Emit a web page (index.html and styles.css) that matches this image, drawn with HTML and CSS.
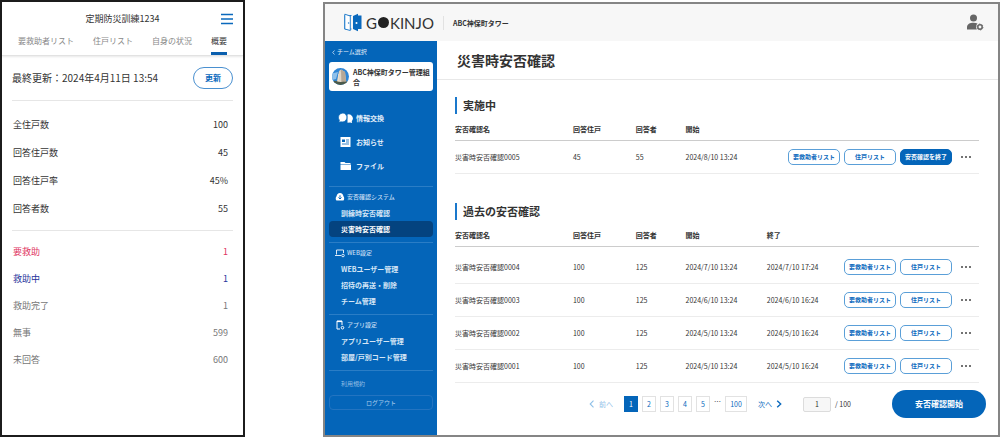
FILE: index.html
```html
<!DOCTYPE html>
<html lang="ja">
<head>
<meta charset="utf-8">
<meta name="viewport" content="width=device-width, initial-scale=1">
<title>GOKINJO 災害時安否確認</title>
<link rel="stylesheet" href="styles.css">
</head>
<body>
<div class="screens">
  <section class="phone">
    <header class="phone-header">
      <div class="phone-bar">
        <h2 class="phone-title">定期防災訓練1234</h2>
        <button class="menu-button" type="button" aria-label="メニュー">
          <svg width="12" height="12" viewBox="0 0 12 12"><path d="M0 1.500h12M0 6h12M0 10.500h12" stroke="#0a69bd" stroke-width="1.400"/></svg>
        </button>
      </div>
      <nav class="tabs">
        <a class="tab" href="#">要救助者リスト</a>
        <a class="tab" href="#">住戸リスト</a>
        <a class="tab" href="#">自身の状況</a>
        <a class="tab tab-active" href="#">概要</a>
      </nav>
    </header>
    <div class="phone-body">
      <div class="updated">
        <span>最終更新：2024年4月11日 13:54</span>
        <button class="refresh" type="button">更新</button>
      </div>
      <dl class="stats">
        <div class="stat"><dt>全住戸数</dt><dd>100</dd></div>
        <div class="stat"><dt>回答住戸数</dt><dd>45</dd></div>
        <div class="stat"><dt>回答住戸率</dt><dd>45%</dd></div>
        <div class="stat"><dt>回答者数</dt><dd>55</dd></div>
      </dl>
      <dl class="stats stats-status">
        <div class="stat stat-rescue"><dt>要救助</dt><dd>1</dd></div>
        <div class="stat stat-ongoing"><dt>救助中</dt><dd>1</dd></div>
        <div class="stat"><dt>救助完了</dt><dd>1</dd></div>
        <div class="stat"><dt>無事</dt><dd>599</dd></div>
        <div class="stat"><dt>未回答</dt><dd>600</dd></div>
      </dl>
    </div>
  </section>

  <section class="admin">
    <header class="admin-header">
      <div class="logo">
        <svg width="18" height="19" viewBox="0 0 18 19">
          <path d="M7.500 2.500H.6v13.500h6.900" fill="none" stroke="#2a80cc" stroke-width="1"/>
          <path d="M.8 1.200 6.300 3v14.500L.8 16z" fill="#fff" stroke="#2a80cc" stroke-width="1"/>
          <circle cx="4.600" cy="10" r=".8" fill="#2a80cc"/>
          <path d="M9 3 14 .8v17.400L9 16zM14 2.500h3.500v13.500H14z" fill="#0a69bd"/>
          <circle cx="12.500" cy="10" r="1" fill="#fff"/>
        </svg>
        <span class="logo-text">G<span class="logo-dot"></span>KINJO</span>
      </div>
      <span class="building">ABC神保町タワー</span>
      <button class="account" type="button" aria-label="アカウント設定">
        <svg width="18" height="17" viewBox="0 0 18 17">
          <circle cx="7.500" cy="4" r="3.500" fill="#666"/>
          <path d="M1 15.500v-2.200C1 10 4 8.700 7.500 8.700c1.600 0 2.900.3 4 .8-1.500 1.500-1.800 4-.6 6z" fill="#666"/>
          <circle cx="14" cy="13" r="2.200" fill="none" stroke="#666" stroke-width="1.500"/>
          <circle cx="14" cy="13" r="3" fill="none" stroke="#666" stroke-width=".8" stroke-dasharray="1.500 1.640"/>
        </svg>
      </button>
    </header>
    <div class="admin-body">
      <aside class="sidebar">
        <a class="back" href="#"><svg width="3" height="5" viewBox="0 0 3 5"><path d="M2.500.5.7 2.500l1.800 2" fill="none" stroke="#cfe3f5" stroke-width=".8"/></svg>チーム選択</a>
        <a class="team" href="#">
          <svg class="avatar" width="17" height="17" viewBox="0 0 17 17">
            <defs><clipPath id="round"><circle cx="8.500" cy="8.500" r="8.500"/></clipPath></defs>
            <g clip-path="url(#round)">
              <path d="M0 0h17v17H0z" fill="#2f86d6"/>
              <path d="M0 5.500 6 4l-2 7-4 1z" fill="#8fc0ea"/>
              <path d="M4.500 15 7 3l2-1.500L13 4l1.500 12z" fill="#d9cdbd"/>
              <path d="M9 1.500 13 4l1.500 12H9.500z" fill="#b5a796"/>
              <path d="M6.500 6v8M8 4v10" stroke="#f1e9de" stroke-width=".6"/>
              <path d="M0 13.500c4-2 6 1 9 .5s5 0 8-1V17H0z" fill="#4c5a4a"/>
            </g>
          </svg>
          <span>ABC神保町タワー管理組合</span>
        </a>
        <nav class="main-nav">
          <a class="nav-link" href="#"><svg width="15" height="12" viewBox="0 0 15 12"><path d="M9.500 2.500a4.200 4.200 0 0 1 4.300 6.800l.3 1.700-2-.5-2.600.2z" fill="#fff"/><path d="M5 1a4.500 4.500 0 1 1-1.800 8.800L.8 10.300l.6-2A4.500 4.500 0 0 1 5 1z" fill="#fff" stroke="#0465b9" stroke-width=".7"/></svg>情報交換</a>
          <a class="nav-link" href="#"><svg width="15" height="12" viewBox="0 0 15 12"><rect x="2.500" y="1" width="10" height="10" fill="#fff"/><path d="M4 3.500h3v2.500H4z" fill="#0465b9"/><path d="M8 4h3M8 6h3M4 8h7" stroke="#0465b9" stroke-width=".8"/></svg>お知らせ</a>
          <a class="nav-link" href="#"><svg width="15" height="12" viewBox="0 0 15 12"><path d="M2.500 2h4l1 1h5v1h-10zM2.500 4.500h10.500v5.500H2.500z" fill="#fff"/></svg>ファイル</a>
        </nav>
        <div class="group">
          <h3 class="group-title"><svg width="10" height="10" viewBox="0 0 10 10"><path d="M5 1c2 0 3.200 1.500 3.400 3.200C9.500 5 9.500 8.500 8 8.500H2C.4 8.500.4 5 1.600 4.200 1.800 2.500 3 1 5 1z" fill="#fff"/><path d="M5 3.300v2.500M3.500 5.500 5 7l1.500-1.500" fill="none" stroke="#0465b9" stroke-width="1"/></svg>安否確認システム</h3>
          <a class="sub-link" href="#">訓練時安否確認</a>
          <a class="sub-link sub-link-active" href="#">災害時安否確認</a>
        </div>
        <div class="group">
          <h3 class="group-title"><svg width="10" height="10" viewBox="0 0 10 10"><path d="M1.500 6.500v-4.500h7v3M0 7.500h6" fill="none" stroke="#dceaf7" stroke-width="1"/><circle cx="8" cy="7.500" r="1.300" fill="none" stroke="#dceaf7" stroke-width="1"/></svg>WEB設定</h3>
          <a class="sub-link" href="#">WEBユーザー管理</a>
          <a class="sub-link" href="#">招待の再送・削除</a>
          <a class="sub-link" href="#">チーム管理</a>
        </div>
        <div class="group">
          <h3 class="group-title"><svg width="10" height="10" viewBox="0 0 10 10"><path d="M5 9H2V1h5v4" fill="none" stroke="#fff" stroke-width="1"/><path d="M2 1.500h5" stroke="#fff" stroke-width="1.200"/><circle cx="7.500" cy="7.700" r="1.300" fill="none" stroke="#fff" stroke-width="1"/></svg>アプリ設定</h3>
          <a class="sub-link" href="#">アプリユーザー管理</a>
          <a class="sub-link" href="#">部屋/戸別コード管理</a>
        </div>
        <div class="side-footer">
          <a class="terms" href="#">利用規約</a>
          <button class="logout" type="button">ログアウト</button>
        </div>
      </aside>

      <main class="main">
        <h1 class="page-title">災害時安否確認</h1>
        <div class="content">
          <h2 class="section-title">実施中</h2>
          <table class="table">
            <colgroup><col class="c-name"><col class="c-homes"><col class="c-people"><col class="c-date"><col></colgroup>
            <thead><tr><th>安否確認名</th><th>回答住戸</th><th>回答者</th><th>開始</th><th></th></tr></thead>
            <tbody>
              <tr><td>災害時安否確認0005</td><td>45</td><td>55</td><td>2024/8/10 13:24</td><td><div class="actions"><button class="pill" type="button">要救助者リスト</button><button class="pill" type="button">住戸リスト</button><button class="pill pill-solid" type="button">安否確認を終了</button><button class="more" type="button" aria-label="その他"><i></i><i></i><i></i></button></div></td></tr>
            </tbody>
          </table>

          <h2 class="section-title section-next">過去の安否確認</h2>
          <table class="table table-past">
            <colgroup><col class="c-name"><col class="c-homes"><col class="c-people"><col class="c-date"><col class="c-end"><col></colgroup>
            <thead><tr><th>安否確認名</th><th>回答住戸</th><th>回答者</th><th>開始</th><th>終了</th><th></th></tr></thead>
            <tbody>
              <tr><td>災害時安否確認0004</td><td>100</td><td>125</td><td>2024/7/10 13:24</td><td>2024/7/10 17:24</td><td><div class="actions"><button class="pill" type="button">要救助者リスト</button><button class="pill" type="button">住戸リスト</button><button class="more" type="button" aria-label="その他"><i></i><i></i><i></i></button></div></td></tr>
              <tr><td>災害時安否確認0003</td><td>100</td><td>125</td><td>2024/6/10 13:24</td><td>2024/6/10 16:24</td><td><div class="actions"><button class="pill" type="button">要救助者リスト</button><button class="pill" type="button">住戸リスト</button><button class="more" type="button" aria-label="その他"><i></i><i></i><i></i></button></div></td></tr>
              <tr><td>災害時安否確認0002</td><td>100</td><td>125</td><td>2024/5/10 13:24</td><td>2024/5/10 16:24</td><td><div class="actions"><button class="pill" type="button">要救助者リスト</button><button class="pill" type="button">住戸リスト</button><button class="more" type="button" aria-label="その他"><i></i><i></i><i></i></button></div></td></tr>
              <tr><td>災害時安否確認0001</td><td>100</td><td>125</td><td>2024/5/10 13:24</td><td>2024/5/10 16:24</td><td><div class="actions"><button class="pill" type="button">要救助者リスト</button><button class="pill" type="button">住戸リスト</button><button class="more" type="button" aria-label="その他"><i></i><i></i><i></i></button></div></td></tr>
            </tbody>
          </table>
        </div>
        <footer class="main-footer">
          <nav class="pager">
            <a class="step step-off" href="#"><svg width="6" height="8" viewBox="0 0 6 8"><path d="M4.500.7 1.200 4l3.300 3.300" fill="none" stroke="#8fc0e8" stroke-width="1.100"/></svg>前へ</a>
            <ul class="pages">
              <li><a class="page page-current" href="#">1</a></li>
              <li><a class="page" href="#">2</a></li>
              <li><a class="page" href="#">3</a></li>
              <li><a class="page" href="#">4</a></li>
              <li><a class="page" href="#">5</a></li>
              <li class="gap">…</li>
              <li><a class="page page-wide" href="#">100</a></li>
            </ul>
            <a class="step" href="#">次へ<svg width="6" height="8" viewBox="0 0 6 8"><path d="M1.200.7 4.700 4 1.200 7.300" fill="none" stroke="#0a69bd" stroke-width="1.400"/></svg></a>
          </nav>
          <label class="jump"><input class="jump-input" type="text" value="1" aria-label="ページ番号">/ 100</label>
          <button class="start" type="button">安否確認開始</button>
        </footer>
      </main>
    </div>
  </section>
</div>
</body>
</html>
```
FILE: styles.css
```css
*, *::before, *::after { box-sizing: border-box; }

body {
  margin: 0;
  background: #fff;
  color: #333;
  font-family: "Noto Sans CJK JP", sans-serif;
  font-size: 7px;
  line-height: 10px;
}

h1, h2, h3, dl, dd, ul { margin: 0; padding: 0; }
ul { list-style: none; }
a { color: inherit; text-decoration: none; }
button, input { font: inherit; color: inherit; padding: 0; }
button { background: none; border: 0; white-space: nowrap; }
svg { display: block; flex: none; }

.screens {
  display: grid;
  grid-template-columns: 244fr 678fr;
  column-gap: 78px;
  min-height: 100vh;
}

/* Phone screen */
.phone { border: 2px solid #1c1c1c; }

.phone-header {
  padding-top: 8px;
  border-bottom: 1px solid #e2e2e2;
  box-shadow: 0 1px 2px #00000018;
}
.phone-bar {
  display: grid;
  grid-template-columns: 1fr auto 1fr;
  align-items: center;
  padding: 0 10px;
}
.phone-title {
  grid-column: 2;
  font-size: 9px;
  font-weight: 400;
  line-height: 18px;
}
.menu-button { justify-self: end; }

.tabs {
  display: flex;
  gap: 19px;
  padding: 5px 16px 0;
  white-space: nowrap;
}
.tab {
  height: 22px;
  border-bottom: 3px solid transparent;
  font-size: 8px;
  line-height: 16px;
  color: #888;
}
.tab-active { color: #333; border-color: #0a5fae; }

.phone-body { padding: 0 10px; }
.updated {
  display: flex;
  align-items: center;
  justify-content: space-between;
  height: 45px;
  border-bottom: 1px solid #e6e6e6;
  font-size: 10px;
}
.refresh {
  width: 40px;
  height: 22px;
  border: 1px solid #4a90d0;
  border-radius: 11px;
  color: #0a69bd;
  font-size: 8px;
  font-weight: 700;
}

.stats { padding: 10px 5px 7px 1px; }
.stat {
  display: flex;
  justify-content: space-between;
  font-size: 9px;
  line-height: 28px;
}
.stats-status {
  padding-top: 7px;
  border-top: 1px solid #e6e6e6;
  color: #777;
}
.stats-status .stat { line-height: 27px; }
.stats .stat-rescue { color: #e0345f; }
.stats .stat-ongoing { color: #27349b; }

/* Admin screen */
.admin {
  display: flex;
  flex-direction: column;
  margin-top: 2px;
  border: 2px solid #858585;
}
.admin-header {
  display: flex;
  align-items: center;
  height: 37px;
  padding: 0 14px 0 19px;
  background: #f7f7f7;
}
.logo {
  display: flex;
  align-items: center;
  gap: 4px;
}
.logo-text {
  display: flex;
  align-items: center;
  gap: 1px;
  color: #333;
  font-family: Lato, sans-serif;
  font-size: 15px;
  line-height: 18px;
}
.logo-dot {
  width: 11px;
  height: 11px;
  border-radius: 50%;
  background: #222;
}
.building {
  margin-left: 9px;
  padding-left: 9px;
  border-left: 1px solid #e2e2e2;
  font-weight: 700;
  line-height: 14px;
}
.account { margin-left: auto; }

.admin-body {
  flex: 1;
  display: grid;
  grid-template-columns: 112px 1fr;
}

/* Sidebar */
.sidebar {
  padding: 6px 4px;
  background: #0465b9;
  color: #e4effa;
}
.back {
  display: flex;
  align-items: center;
  gap: 2px;
  padding-left: 3px;
  font-size: 6px;
}
.team {
  display: flex;
  align-items: center;
  gap: 4px;
  height: 29px;
  margin: 5px 0 15px;
  padding: 0 2px 0 3px;
  border-radius: 3px;
  background: #fff;
  color: #333;
  font-weight: 700;
}
.main-nav { padding-bottom: 8px; }
.nav-link {
  display: flex;
  align-items: center;
  gap: 3px;
  height: 24px;
  padding-left: 9px;
  font-weight: 700;
}
.group {
  padding: 3px 0 5px;
  border-top: 1px solid #2a7dc6;
}
.group-title {
  display: flex;
  align-items: center;
  gap: 2px;
  margin-bottom: 1px;
  padding-left: 6px;
  color: #c3dcf2;
  font-size: 6px;
  font-weight: 500;
  line-height: 14px;
}
.sub-link {
  display: block;
  padding-left: 12px;
  border-radius: 4px;
  font-weight: 700;
  color: #d5e6f6;
  line-height: 16px;
}
.sub-link-active {
  background: #04437f;
  color: #fff;
}
.side-footer {
  padding-top: 5px;
  border-top: 1px solid #2a7dc6;
}
.terms {
  display: block;
  padding-left: 12px;
  color: #8fbce4;
  font-size: 6px;
  line-height: 16px;
}
.logout {
  display: block;
  width: 100%;
  height: 15px;
  margin-top: 3px;
  border: 1px solid #2374c1;
  border-radius: 4px;
  color: #a9cdec;
  font-size: 6px;
}

/* Main column */
.main {
  display: flex;
  flex-direction: column;
  min-width: 0;
}
.page-title {
  padding: 0 20px;
  border-bottom: 1px solid #e8e8e8;
  font-size: 14px;
  font-weight: 700;
  line-height: 38px;
}
.content { padding: 17px 19px 0 18px; }
.section-title {
  padding-left: 6px;
  border-left: 2px solid #1a78cc;
  font-size: 11px;
  font-weight: 700;
  line-height: 17px;
}
.section-next { margin-top: 29px; }

.table {
  width: 100%;
  table-layout: fixed;
  border-collapse: separate;
  border-spacing: 0;
  white-space: nowrap;
}
.c-name { width: 22.5%; }
.c-homes { width: 12%; }
.c-people { width: 9.5%; }
.c-date { width: 15.5%; }
.c-end { width: 11%; }
.table th {
  height: 27px;
  padding: 4px 0 0;
  border-bottom: 1px solid #ccc;
  text-align: left;
  font-weight: 700;
}
.table td {
  height: 33px;
  padding: 0;
  border-bottom: 1px solid #ececec;
}
.table-past tbody tr:first-child td {
  height: 37px;
  padding-top: 4px;
}
.actions {
  display: flex;
  justify-content: flex-end;
  align-items: center;
  gap: 4px;
  padding-right: 8px;
}
.pill {
  width: 52px;
  height: 16px;
  border: 1px solid #5a9fd8;
  border-radius: 5px;
  color: #0a69bd;
  font-size: 6px;
  font-weight: 700;
}
.pill-solid {
  background: #0465b9;
  border-color: #0465b9;
  color: #fff;
}
.more {
  display: flex;
  gap: 2px;
  margin-left: 5px;
}
.more i {
  width: 2px;
  height: 2px;
  border-radius: 50%;
  background: #444;
}

.main-footer {
  display: flex;
  align-items: center;
  justify-content: flex-end;
  padding: 7px 12px 0;
}
.pager {
  display: flex;
  align-items: center;
  gap: 11px;
}
.step {
  display: flex;
  align-items: center;
  gap: 4px;
  color: #0a69bd;
}
.step-off { color: #8fc0e8; }
.pages {
  display: flex;
  gap: 4px;
}
.page {
  display: block;
  min-width: 14px;
  border: 1px solid #e2e2e2;
  color: #0a69bd;
  line-height: 14px;
  text-align: center;
}
.page-wide { min-width: 22px; }
.page-current {
  border-color: #0465b9;
  background: #0465b9;
  color: #fff;
}
.jump {
  display: flex;
  align-items: center;
  gap: 4px;
  margin: 0 41px 0 21px;
}
.jump-input {
  width: 28px;
  height: 15px;
  border: 1px solid #dcdcdc;
  border-radius: 2px;
  background: #f7f7f7;
  text-align: center;
}
.start {
  width: 94px;
  height: 28px;
  border-radius: 14px;
  background: #0465b9;
  color: #fff;
  font-size: 8px;
  font-weight: 700;
}
```
